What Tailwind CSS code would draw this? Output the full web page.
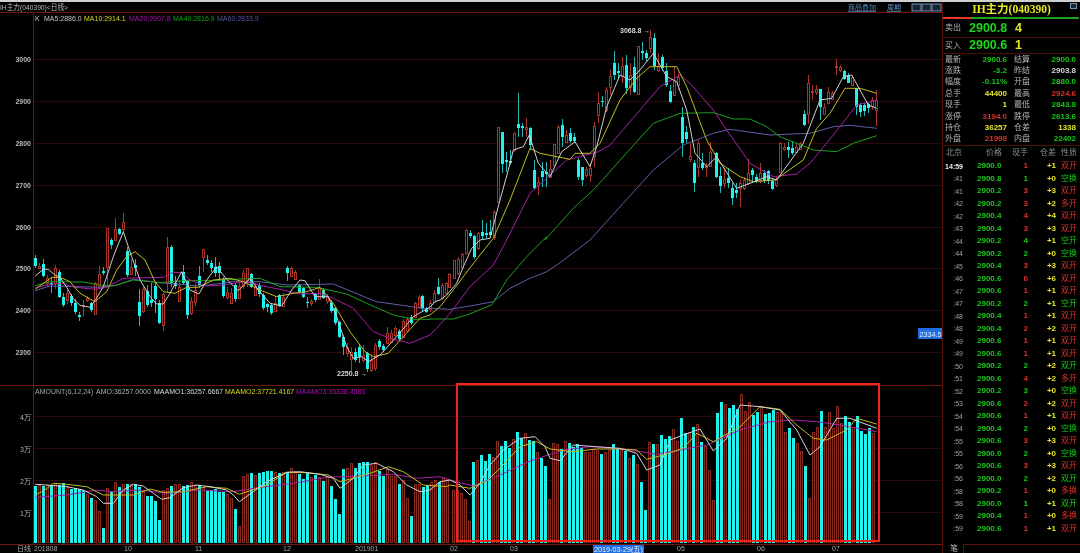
<!DOCTYPE html>
<html lang="zh">
<head>
  <meta charset="UTF-8" />
  <title>IH主力 (040390) 日线</title>
  <script src="https://cdn.jsdelivr.net/npm/@tailwindcss/browser@4"></script>
</head>
<body class="bg-black w-[1080px] h-[553px] overflow-hidden flex flex-col font-['Liberation_Sans','Noto_Sans_CJK_SC',sans-serif]">
  <div class="h-[2px] bg-[#cfcfcf] shrink-0"></div>
  <div class="flex h-[551px]">
    <!-- CHART -->
    <svg id="chart" class="w-[942px] h-[551px] shrink-0 overflow-visible blur-[0.35px]" viewBox="0 2 942 551" font-size="7">
      <g id="grid"></g>
      <g id="candles"></g>
      <g id="vols"></g>
      <g id="lines" fill="none" stroke-width="1" stroke-linejoin="round"></g>
      <text x="0" y="10" fill="#b8b8b8" font-size="8" textLength="68" lengthAdjust="spacingAndGlyphs">IH主力(040390)&lt;日线&gt;</text>
      <text x="848" y="10" fill="#5b8fc4" text-decoration="underline">商品叠加</text>
      <text x="887" y="10" fill="#5b8fc4" text-decoration="underline">周期</text>
      <rect x="912" y="4" width="9" height="7" fill="#1a2530" stroke="#6f93b5"/>
      <rect x="922" y="4" width="9" height="7" fill="#1a2530" stroke="#6f93b5"/>
      <rect x="932" y="4" width="9" height="7" fill="#1a2530" stroke="#6f93b5"/>

      <g font-size="7">
        <text x="35" y="21" fill="#c0c0c0">K</text>
        <text x="44" y="21" fill="#c8c8c8">MA5:2886.0</text>
        <text x="84" y="21" fill="#d8d820">MA10:2914.1</text>
        <text x="129" y="21" fill="#b010b0">MA20:2907.8</text>
        <text x="173" y="21" fill="#10a810">MA40:2816.9</text>
        <text x="217" y="21" fill="#5858a8">MA60:2833.9</text>
      </g>

      <g fill="#b8b8b8" font-weight="700" text-anchor="end">
        <text x="31" y="62">3000</text>
        <text x="31" y="104">2900</text>
        <text x="31" y="146">2800</text>
        <text x="31" y="188">2700</text>
        <text x="31" y="230">2600</text>
        <text x="31" y="271">2500</text>
        <text x="31" y="313">2400</text>
        <text x="31" y="355">2300</text>
        <text x="31" y="420" font-weight="400">4万</text>
        <text x="31" y="452" font-weight="400">3万</text>
        <text x="31" y="484" font-weight="400">2万</text>
        <text x="31" y="516" font-weight="400">1万</text>
      </g>

      <text x="620" y="33" fill="#d8d8d8" font-weight="700">3068.8 →</text>
      <text x="337" y="376" fill="#d8d8d8" font-weight="700">2250.8 →</text>
      <rect x="918" y="328" width="25" height="11" fill="#1f6fe0"/>
      <text x="919.5" y="336.5" fill="#e8f0ff" font-size="8" textLength="22" lengthAdjust="spacingAndGlyphs">2334.5</text>

      <g font-size="7">
        <text x="35" y="394" fill="#a8a8a8">AMOUNT(6,12,24)</text>
        <text x="96" y="394" fill="#b0b0b0">AMO:36257.0000</text>
        <text x="154" y="394" fill="#d8d8d8">MAAMO1:36257.6667</text>
        <text x="225" y="394" fill="#d8d820">MAAMO2:37721.4167</text>
        <text x="296" y="394" fill="#b010b0">MAAMO3:35338.4583</text>
      </g>

      <g fill="#a8a8a8">
        <text x="17" y="551">日线</text>
        <text x="34" y="551">201808</text>
        <text x="124" y="551">10</text>
        <text x="195" y="551">11</text>
        <text x="283" y="551">12</text>
        <text x="355" y="551">201901</text>
        <text x="450" y="551">02</text>
        <text x="510" y="551">03</text>
        <text x="677" y="551">05</text>
        <text x="757" y="551">06</text>
        <text x="832" y="551">07</text>
      </g>
      <rect x="593" y="545" width="51" height="8" fill="#1f6fe0"/>
      <text x="594" y="552" fill="#e8f0ff" font-size="8" textLength="49" lengthAdjust="spacingAndGlyphs">2019-03-29(五)</text>

      <rect x="457" y="384" width="422" height="157" fill="none" stroke="#f0241c" stroke-width="2"/>
    </svg>

    <!-- QUOTE PANEL -->
    <aside class="w-[138px] border-l border-[#5a1410] flex flex-col text-[8px] leading-none font-bold text-[#b4b4b4] blur-[0.25px] relative z-10 bg-black">
      <div class="h-[15px] flex items-center justify-center relative text-[11.5px] text-[#e6e62a] font-['Liberation_Serif','Noto_Sans_CJK_SC',serif]">
        IH主力(040390)
        <span class="absolute right-[3px] top-[1px] w-[7px] h-[6px] border border-[#6f93b5] bg-[#1a2530]"></span>
      </div>
      <div class="h-[2px] flex mr-[1px]">
        <div class="w-[28px] bg-[#e83a30]"></div>
        <div class="flex-1 bg-[#20a020]"></div>
      </div>
      <div class="h-[19px] flex items-center border-b border-[#4a100c] pl-[2px]">
        <span class="w-[24px] font-normal">卖出</span>
        <span class="w-[46px] text-[12.5px] text-[#18d818]">2900.8</span>
        <span class="text-[12.5px] text-[#e6e62a]">4</span>
      </div>
      <div class="h-[16px] flex items-center border-b border-[#4a100c] pl-[2px]">
        <span class="w-[24px] font-normal">买入</span>
        <span class="w-[46px] text-[12.5px] text-[#18d818]">2900.6</span>
        <span class="text-[12.5px] text-[#e6e62a]">1</span>
      </div>
      <div id="stats" class="h-[91px] pl-[2px] grid auto-rows-[11.4px] items-center"></div>
      <div class="h-[15px] border-t border-[#4a100c] grid grid-cols-[20px_39px_26px_28px_21px] items-center font-normal text-[#8c8c8c] whitespace-nowrap">
        <span class="pl-[3px]">北京</span>
        <span class="text-right">价格</span>
        <span class="text-right">现手</span>
        <span class="text-right">仓差</span>
        <span class="pl-[5px]">性质</span>
      </div>
      <div id="trades" class="grid auto-rows-[12.5px] items-center"></div>
      <div class="mt-auto h-[9px] flex">
        <span class="w-[20px] pl-[7px] font-normal pt-[1px]">笔</span>
        <div class="flex-1 border-l border-t border-[#5a1410]"></div>
      </div>
    </aside>
  </div>

  <script>
    // prices, labels and bars were read off the reference by eye
    const RED='#a8342a', CYAN='#22f2ee';
    const svgNS='http://www.w3.org/2000/svg';
    function el(parent,tag,attrs){
      const e=document.createElementNS(svgNS,tag);
      for(const k in attrs)e.setAttribute(k,attrs[k]);
      document.getElementById(parent).appendChild(e);
      return e;
    }

    // grid + frame
    [59,101,143,185,227,268,310,352,416,448,480,512].forEach(y=>el('grid','rect',{x:34,y:y,width:908,height:1,fill:'#2c0a08'}));
    el('grid','rect',{x:33,y:12,width:1,height:532,fill:'#701810'});
    el('grid','rect',{x:0,y:12,width:942,height:1,fill:'#701810'});
    el('grid','rect',{x:0,y:385,width:942,height:1,fill:'#701810'});
    el('grid','rect',{x:0,y:544,width:942,height:1,fill:'#701810'});

    // coordinate helpers for the three read-offs: zoom units -> page px
    const A=(x,y)=>[x/3,200+y/3];
    const B=(x,y)=>[430+x/3,220+y/3];
    const C=(x,y)=>[450+x/3,20+y/3];

    const candlesA=`106 c 175 197 165 205;118 r 197 203 188 208;130 c 193 228 178 232;142 r 235 248 225 262;154 c 250 255 235 278;166 r 205 250 195 268;178 c 217 290 210 295;190 c 292 316 280 322;202 r 280 300 270 312;214 c 288 310 282 318;226 c 308 335 298 342;238 c 344 352 335 362;250 r 316 318 300 348;262 r 295 300 288 305;274 c 310 330 305 335;286 r 250 343 245 345;298 r 222 258 197 262;310 c 214 218 200 225;322 r 85 200 85 258;334 c 120 134 115 148;346 r 88 120 55 122;358 c 88 102 85 105;370 r 67 87 40 95;382 c 152 225 140 232;394 r 200 222 178 225;406 c 195 205 178 228;418 c 306 348 268 378;430 r 268 332 262 340;442 c 272 315 255 320;454 c 300 308 250 320;466 c 258 298 250 340;478 c 310 368 300 372;490 r 282 374 280 392;502 r 140 248 110 275;514 c 140 248 135 262;526 c 250 258 228 268;538 r 262 302 240 306;550 c 215 250 195 255;562 c 242 344 240 358;574 r 304 338 290 345;586 r 270 305 250 318;598 c 228 255 198 265;610 r 147 170 147 215;622 c 180 190 166 196;634 c 190 205 180 215;646 c 200 218 172 232;658 c 198 220 185 240;670 c 238 288 232 294;682 r 275 290 262 298;694 r 280 310 265 312;706 c 255 298 250 305;718 r 258 295 250 298;730 r 220 258 210 268;742 r 205 240 205 260;754 c 222 260 218 264;766 r 258 284 250 288;778 c 255 282 248 290;790 c 285 325 280 330;802 c 312 322 310 335;814 c 316 340 310 345;826 r 310 332 288 334;838 c 285 318 282 322;850 r 290 318 280 322;862 c 205 220 198 242;874 r 205 228 200 232;886 r 216 236 210 238;898 c 255 275 252 280;910 c 265 290 262 294;922 c 305 310 290 325;934 r 304 310 298 318;946 c 282 300 280 305;958 r 264 296 238 298;970 c 270 295 265 298;982 r 290 304 282 312;994 c 308 334 300 340;1006 c 325 368 320 375;1018 c 366 412 362 415;1030 c 410 440 405 465;1042 r 440 460 428 470;1054 r 455 478 440 512;1066 c 455 480 445 485;1078 c 440 470 432 490;1090 r 464 480 435 490;1102 c 458 508 455 515;1114 r 480 510 462 515;1126 r 435 505 430 514;1138 c 424 440 418 450;1150 c 438 450 432 455;1162 r 400 428 380 432;1174 r 398 425 390 430;1186 r 385 405 378 410;1198 c 392 416 388 420;1210 r 362 410 358 412;1222 r 358 392 350 395;1234 c 350 370 345 375;1246 r 310 350 305 354;1258 r 290 320 285 325;1266 c 288 328 285 335;1278 c 325 335 320 340;1290 r 310 328 300 335;1302 r 278 305 270 310;1314 c 260 282 235 285;1326 r 255 295 250 300;1338 r 250 280 245 285;1348 r 222 262 218 265`;
    const candlesB=`72 r 120 175 120 175;83 r 118 160 112 165;95 r 103 140 98 145;107 r 30 100 28 105;119 c 40 48 30 55;131 c 48 112 44 116;143 r 38 85 36 90;155 c 35 48 0 60;167 c 40 45 10 55;179 c 35 45 0 55`;
    const candlesC=`131 r 575 650 570 660;143 r 322 545 320 548;155 c 336 432 336 458;167 c 420 426 395 455;179 c 422 428 390 435;191 r 338 390 335 395;203 c 312 325 218 350;215 c 318 323 310 350;227 r 320 326 295 350;239 c 325 375 320 390;251 c 450 505 420 510;263 r 485 495 470 525;275 c 452 470 425 500;287 c 456 462 425 500;299 r 448 470 420 475;311 r 372 435 372 436;323 r 320 400 315 402;335 c 316 352 298 382;347 r 345 365 330 370;359 c 338 362 325 370;371 c 352 362 340 370;383 c 420 472 415 480;395 c 442 480 440 498;407 r 446 466 440 470;419 r 445 465 430 485;431 r 318 408 305 440;443 r 250 285 215 310;455 c 242 246 228 260;467 r 210 270 200 275;479 r 168 200 150 225;491 c 128 164 92 180;503 c 152 160 130 175;515 r 138 168 110 190;527 c 136 205 106 222;539 r 165 200 130 225;551 c 140 215 112 220;563 r 78 222 78 225;575 c 92 98 65 120;587 c 100 115 90 125;599 r 52 85 30 100;611 c 54 138 40 150;623 r 138 150 100 155;635 c 110 145 105 152;647 c 152 195 130 200;659 c 212 245 195 250;671 r 182 225 140 228;683 r 172 195 160 210;695 c 292 368 262 410;707 c 336 358 318 370;719 r 408 418 370 425;731 c 428 490 420 515;743 r 370 440 360 470;755 c 428 444 400 450;767 r 438 442 430 470;779 r 395 438 365 440;799 c 398 470 395 475;811 c 468 498 440 520;823 r 478 490 445 505;835 c 474 490 445 505;847 c 505 535 490 555;859 c 510 520 490 535;871 r 490 503 480 562;883 r 480 505 470 510;895 r 458 490 418 495;907 c 450 465 445 490;919 c 470 484 462 490;931 r 460 480 430 490;943 c 458 484 450 490;955 c 452 482 450 492;967 c 482 506 478 510;979 r 478 494 470 500;991 r 370 455 365 458;1003 r 380 386 370 392;1015 c 382 390 365 415;1027 c 385 400 362 405;1039 r 380 396 370 398;1051 r 368 386 365 390;1063 c 282 315 270 318;1075 r 190 282 165 312;1087 r 212 215 195 240;1099 r 208 215 195 225;1111 c 208 262 208 300;1123 r 262 282 250 285;1135 r 215 248 200 252;1147 r 218 236 212 240;1159 r 138 142 118 165;1171 r 140 150 135 155;1183 c 152 178 150 180;1195 c 165 188 160 190;1207 r 170 195 165 198;1219 c 205 262 205 285;1231 c 256 275 250 290;1243 c 254 272 250 288;1255 c 252 265 248 280;1267 r 240 258 232 270;1279 r 240 270 210 318`;

    function drawCandles(str,map){
      str.split(';').forEach(s=>{
        const [zx,k,t,b,h,l]=s.trim().split(' ');
        const [x,top]=map(+zx,+t), bot=map(+zx,+b)[1], hi=map(+zx,+h)[1], lo=map(+zx,+l)[1];
        const cx=Math.round(x), y1=Math.round(top), y2=Math.max(Math.round(bot),y1+1);
        const color=k==='c'?CYAN:RED;
        el('candles','rect',{x:cx,y:Math.round(hi),width:1,height:Math.max(Math.round(lo)-Math.round(hi),1),fill:k==='c'?'#1fb8b6':RED});
        if(k==='c') el('candles','rect',{x:cx-1,y:y1,width:3,height:y2-y1,fill:color});
        else el('candles','rect',{x:cx-.5,y:y1+.5,width:2,height:y2-y1,fill:'#000',stroke:color});
      });
    }
    drawCandles(candlesA,A); drawCandles(candlesB,B); drawCandles(candlesC,C);

    // moving averages on the price chart
    const conv=(map,pts)=>{const o=[];for(let i=0;i<pts.length;i+=2)o.push(map(pts[i],pts[i+1]).map(n=>n.toFixed(1)).join(','));return o};
    const maLines=[
      ['#5e5ea8',[106,272,150,258,300,262,350,255,400,238,480,248,600,258,700,245,780,245,860,255,1000,252,1080,285,1130,305,1220,318,1280,327],[0,265,60,268,120,258,190,245,240,205,300,175,350,155,390,128],[420,660,610,450,700,375,790,340,840,328,960,345,1080,340,1150,320,1200,316,1280,325]],
      ['#1ca01c',[106,257,150,245,250,246,300,255,340,258,400,240,480,248,550,242,640,242,700,238,780,235,840,260,950,262,1040,282,1100,310,1180,345,1240,358,1290,358],[0,297,70,297,110,285,185,255,230,180,290,110,350,50],[285,660,370,565,430,510,610,310,690,280,790,278,850,297,900,297,950,320,990,350,1090,390,1160,395,1210,370,1280,347]],
      ['#a81ea8',[106,263,140,255,185,250,225,262,285,268,320,262,370,235,490,232,520,217,545,218,570,240,620,258,670,255,730,245,790,258,850,270,900,282,960,280,1000,295,1060,325,1120,395,1170,415,1230,430,1290,405],[20,325,60,280,120,200,190,135,230,60],[240,520,350,420,445,395,480,375,630,200,690,165,720,190,790,270,830,330,900,430,970,470,1040,462,1080,430,1150,345,1220,255,1280,240]],
      ['#c4bc20',[106,268,130,250,155,232,180,232,210,245,240,280,285,305,320,275,350,210,380,170,405,155,435,180,465,245,490,275,525,280,560,262,595,262,640,240,690,235,730,245,780,270,830,290,880,280,920,275,960,262,1000,310,1050,395,1095,455,1120,470,1165,460,1210,410,1260,355],[0,285,30,260,70,210,115,150,150,105,190,55],[180,540,240,385,270,400,360,418,375,400,420,400,450,370,510,240,560,175,600,140,680,140,710,200,770,360,810,430,870,470,910,485,975,480,1060,420,1100,325,1140,280,1185,205,1230,205,1280,220]],
      ['#cfcfcf',[106,228,130,208,145,208,165,225,180,232,200,262,220,296,240,316,270,322,285,302,310,260,340,170,370,95,395,170,420,240,450,290,470,312,490,312,510,280,545,215,570,270,597,282,620,240,650,200,680,238,715,272,750,235,775,270,810,310,845,318,875,270,900,240,915,242,945,290,985,290,1010,350,1040,440,1060,475,1085,470,1105,485,1140,465,1190,410,1240,350,1275,330],[0,262,15,245,30,240,50,225,80,190,100,140,125,85,150,60,180,55],[150,540,175,450,190,390,220,380,238,345,265,430,300,470,335,395,375,365,420,440,440,380,470,260,510,165,540,180,570,150,610,100,650,170,680,185,710,270,735,400,770,440,800,410,860,505,900,490,950,470,980,480,1060,370,1110,240,1145,235,1180,170,1205,165,1255,255,1280,265]]
    ];
    maLines.forEach(([color,a,b,c])=>{
      el('lines','polyline',{stroke:color,points:[...conv(A,a),...conv(B,b),...conv(C,c)].join(' ')});
    });

    // volume bars: zoom x, kind, top (zoom y); base is the same for all
    const volsA=`106 c 333;118 r 330;130 c 332;142 r 330;154 c 332;166 r 325;178 c 330;190 c 324;202 r 333;214 c 343;226 c 338;238 c 342;250 c 345;262 r 358;274 c 368;286 r 375;298 r 408;310 c 460;322 r 338;334 c 347;346 r 322;358 c 336;370 r 328;382 c 326;394 r 328;406 c 328;418 c 335;430 r 347;442 c 362;454 c 362;466 c 378;478 c 435;490 r 345;502 r 340;514 c 334;526 r 328;538 r 328;550 c 333;562 c 331;574 r 322;586 r 330;598 c 330;610 r 335;622 c 347;634 c 346;646 c 343;658 c 351;670 c 351;682 r 358;694 r 368;706 c 402;718 r 452;730 r 302;742 r 298;754 c 295;766 r 300;778 c 295;790 c 290;802 c 289;814 c 289;826 r 290;838 c 293;850 r 290;862 c 290;874 r 280;886 r 287;898 c 298;910 c 312;922 c 295;934 r 305;946 c 299;958 r 305;970 c 317;982 r 305;994 c 334;1006 c 372;1018 c 418;1030 c 281;1042 r 280;1054 r 265;1066 c 280;1078 c 264;1090 c 262;1102 c 261;1114 r 270;1126 r 262;1138 c 288;1150 c 302;1162 r 282;1174 r 303;1186 r 302;1198 c 327;1210 r 316;1222 r 368;1234 c 423;1246 r 328;1258 r 328;1270 c 335;1282 c 331;1294 r 322;1306 r 316;1318 c 322;1330 r 306;1342 r 312`;
    const volsB=`8 r 345;21 r 345;33 r 355;45 r 372;57 r 438;70 c 261;82 r 255;94 c 240;106 c 259;118 c 236;130 r 245;142 r 198;154 c 213;166 c 199;178 c 220;190 r 192;202 c 170;214 c 188;226 r 174;238 c 195;250 c 197;262 r 232;274 c 250;286 c 272;298 r 372;310 r 205;322 r 208;334 c 222;346 r 198;358 c 205;370 c 215;382 c 208;394 c 218;406 r 232;418 r 232;430 r 222;442 r 225;454 c 238;466 r 232;478 r 225;490 c 208;502 c 222;514 r 225;526 c 228;538 r 250;550 c 240;562 r 268;574 c 320;586 c 405;598 r 202;610 c 207;622 r 208;634 c 179;646 c 192;658 c 182;670 r 162;682 r 198;694 c 130;706 c 175;718 r 172;730 c 155;742 r 146;754 c 200;766 r 212;778 r 285;790 r 375;802 c 114;814 c 80;826 r 88;838 c 100;850 c 90;862 c 102;874 r 58;886 r 108;898 r 82;910 c 120;922 c 112;934 r 92;946 c 116;958 c 114;970 c 105;982 r 110;994 r 110;1006 r 170;1018 c 160;1030 c 190;1042 r 205;1054 r 228;1066 c 272;1078 r 368;1090 r 172;1102 r 155;1114 c 108;1126 r 155;1138 r 110;1150 r 160;1162 r 94;1174 r 145;1186 c 124;1198 c 142;1210 r 155;1222 c 124;1234 c 168;1246 c 177;1258 c 160;1270 r 175`;
    function drawVols(str,off){
      str.split(';').forEach(s=>{
        const [zx,k,t]=s.split(' ');
        const x=Math.round(off+(+zx)/3), top=Math.round(375+(+t)/3), base=543;
        if(k==='c') el('vols','rect',{x:x-1,y:top,width:3,height:base-top,fill:CYAN});
        else el('vols','rect',{x:x-.5,y:top+.5,width:2,height:base-top-1,fill:'#260a07',stroke:'#86291f'});
      });
    }
    drawVols(volsA,0); drawVols(volsB,450);

    const zoomLine=(pts,map)=>conv(map,pts);
    const V5=(x,y)=>[x/3,375+y/3], V6=(x,y)=>[450+x/3,375+y/3];
    [
      ['#a81ea8',[106,367,200,360,290,345,340,350,420,345,500,355,600,345,700,350,760,340,880,325,980,307,1080,303,1180,298,1250,310,1320,305],[0,315,70,333,150,300,240,258,340,225,420,215,520,222,620,238,770,210,870,165,960,140,1030,135,1100,140,1170,150,1280,170]],
      ['#c4bc20',[106,360,135,345,160,325,200,328,260,335,310,360,400,360,450,342,490,352,550,350,620,335,680,340,718,358,800,330,860,292,920,293,985,300,1020,320,1060,310,1110,295,1165,275,1210,290,1270,330,1340,335],[0,330,60,340,110,318,150,280,210,215,260,200,300,222,370,230,440,222,510,222,560,225,590,253,640,240,700,220,740,175,790,200,870,155,930,95,990,103,1040,150,1090,190,1130,195,1190,165,1220,130,1280,147]],
      ['#d2d2d2',[106,328,140,330,200,335,250,345,290,365,310,385,340,385,370,345,400,328,430,333,460,355,485,373,510,368,550,338,590,330,630,335,680,345,700,360,718,380,760,350,800,320,860,292,900,290,960,298,1000,310,1020,340,1060,310,1090,270,1130,265,1180,290,1220,330,1260,350,1290,345,1320,320],[0,315,30,330,60,360,90,325,120,270,160,225,210,190,255,185,285,215,300,250,330,257,370,210,440,215,510,220,560,235,590,285,630,270,660,195,700,180,750,162,790,228,830,190,870,90,930,95,990,105,1040,165,1080,240,1110,215,1160,130,1200,130,1280,160]]
    ].forEach(([color,a,b])=>{
      el('lines','polyline',{stroke:color,points:[...zoomLine(a,V5),...zoomLine(b,V6)].join(' ')});
    });

    // quote panel
    const G='text-[#18c818]',R='text-[#d8342c]',Y='text-[#e6e62a]',W='text-[#d8d8d8]';
    const stats=[['最新','2900.6',G,'结算','2900.0',G],['涨跌','-3.2',G,'昨结','2903.8',W],['幅度','-0.11%',G,'开盘','2880.0',G],['总手','44400',Y,'最高','2924.6',R],['现手','1',Y,'最低','2843.8',G],['涨停','3194.0',R,'跌停','2613.6',G],['持仓','36257',Y,'仓差','1338',Y],['外盘','21998',R,'内盘','22402',G]];
    document.getElementById('stats').innerHTML=stats.map(s=>`<div class="grid grid-cols-[16px_46px_7px_16px_46px] items-center whitespace-nowrap"><span class="font-normal">${s[0]}</span><span class="text-right ${s[2]}">${s[1]}</span><span></span><span class="font-normal">${s[3]}</span><span class="text-right ${s[5]}">${s[4]}</span></div>`).join('');

    const trades=[
      ['14:59','2900.0',1,'+1','双开','r'],[':41','2900.8',1,'+0','空换','g'],[':41','2900.2',3,'+3','双开','r'],[':42','2900.2',3,'+2','多开','r'],[':42','2900.4',4,'+4','双开','r'],
      [':43','2900.4',3,'+3','双开','r'],[':44','2900.2',4,'+1','空开','g'],[':44','2900.2',2,'+0','空换','g'],[':45','2900.4',3,'+3','双开','r'],[':46','2900.6',6,'+6','双开','r'],
      [':47','2900.6',1,'+1','双开','r'],[':47','2900.2',2,'+1','空开','g'],[':48','2900.4',1,'+1','双开','r'],[':48','2900.4',2,'+2','双开','r'],[':49','2900.6',1,'+1','双开','r'],
      [':49','2900.6',1,'+1','双开','r'],[':50','2900.2',2,'+2','双开','g'],[':51','2900.6',4,'+2','多开','r'],[':52','2900.2',3,'+0','空换','g'],[':53','2900.6',2,'+2','双开','r'],
      [':54','2900.6',1,'+1','双开','r'],[':54','2900.4',2,'+0','空换','g'],[':55','2900.6',3,'+3','双开','r'],[':55','2900.0',2,'+0','空换','g'],[':56','2900.6',3,'+3','双开','r'],
      [':56','2900.0',2,'+2','双开','g'],[':58','2900.2',1,'+0','多换','r'],[':58','2900.0',1,'+1','双开','g'],[':59','2900.4',1,'+0','多换','r'],[':59','2900.6',1,'+1','双开','r']
    ];
    document.getElementById('trades').innerHTML=trades.map((t,i)=>{
      const c=t[5]==='r'?R:G;
      return `<div class="grid grid-cols-[20px_39px_26px_28px_21px] items-center whitespace-nowrap"><span class="text-right text-[7px] ${i?'text-[#a0a0a0] font-normal':'text-[#e8e8e8]'}">${t[0]}</span><span class="pl-[14px] ${G}">${t[1]}</span><span class="text-right ${c}">${t[2]}</span><span class="text-right ${Y}">${t[3]}</span><span class="pl-[5px] font-normal ${c}">${t[4]}</span></div>`;
    }).join('');
  </script>
</body>
</html>
